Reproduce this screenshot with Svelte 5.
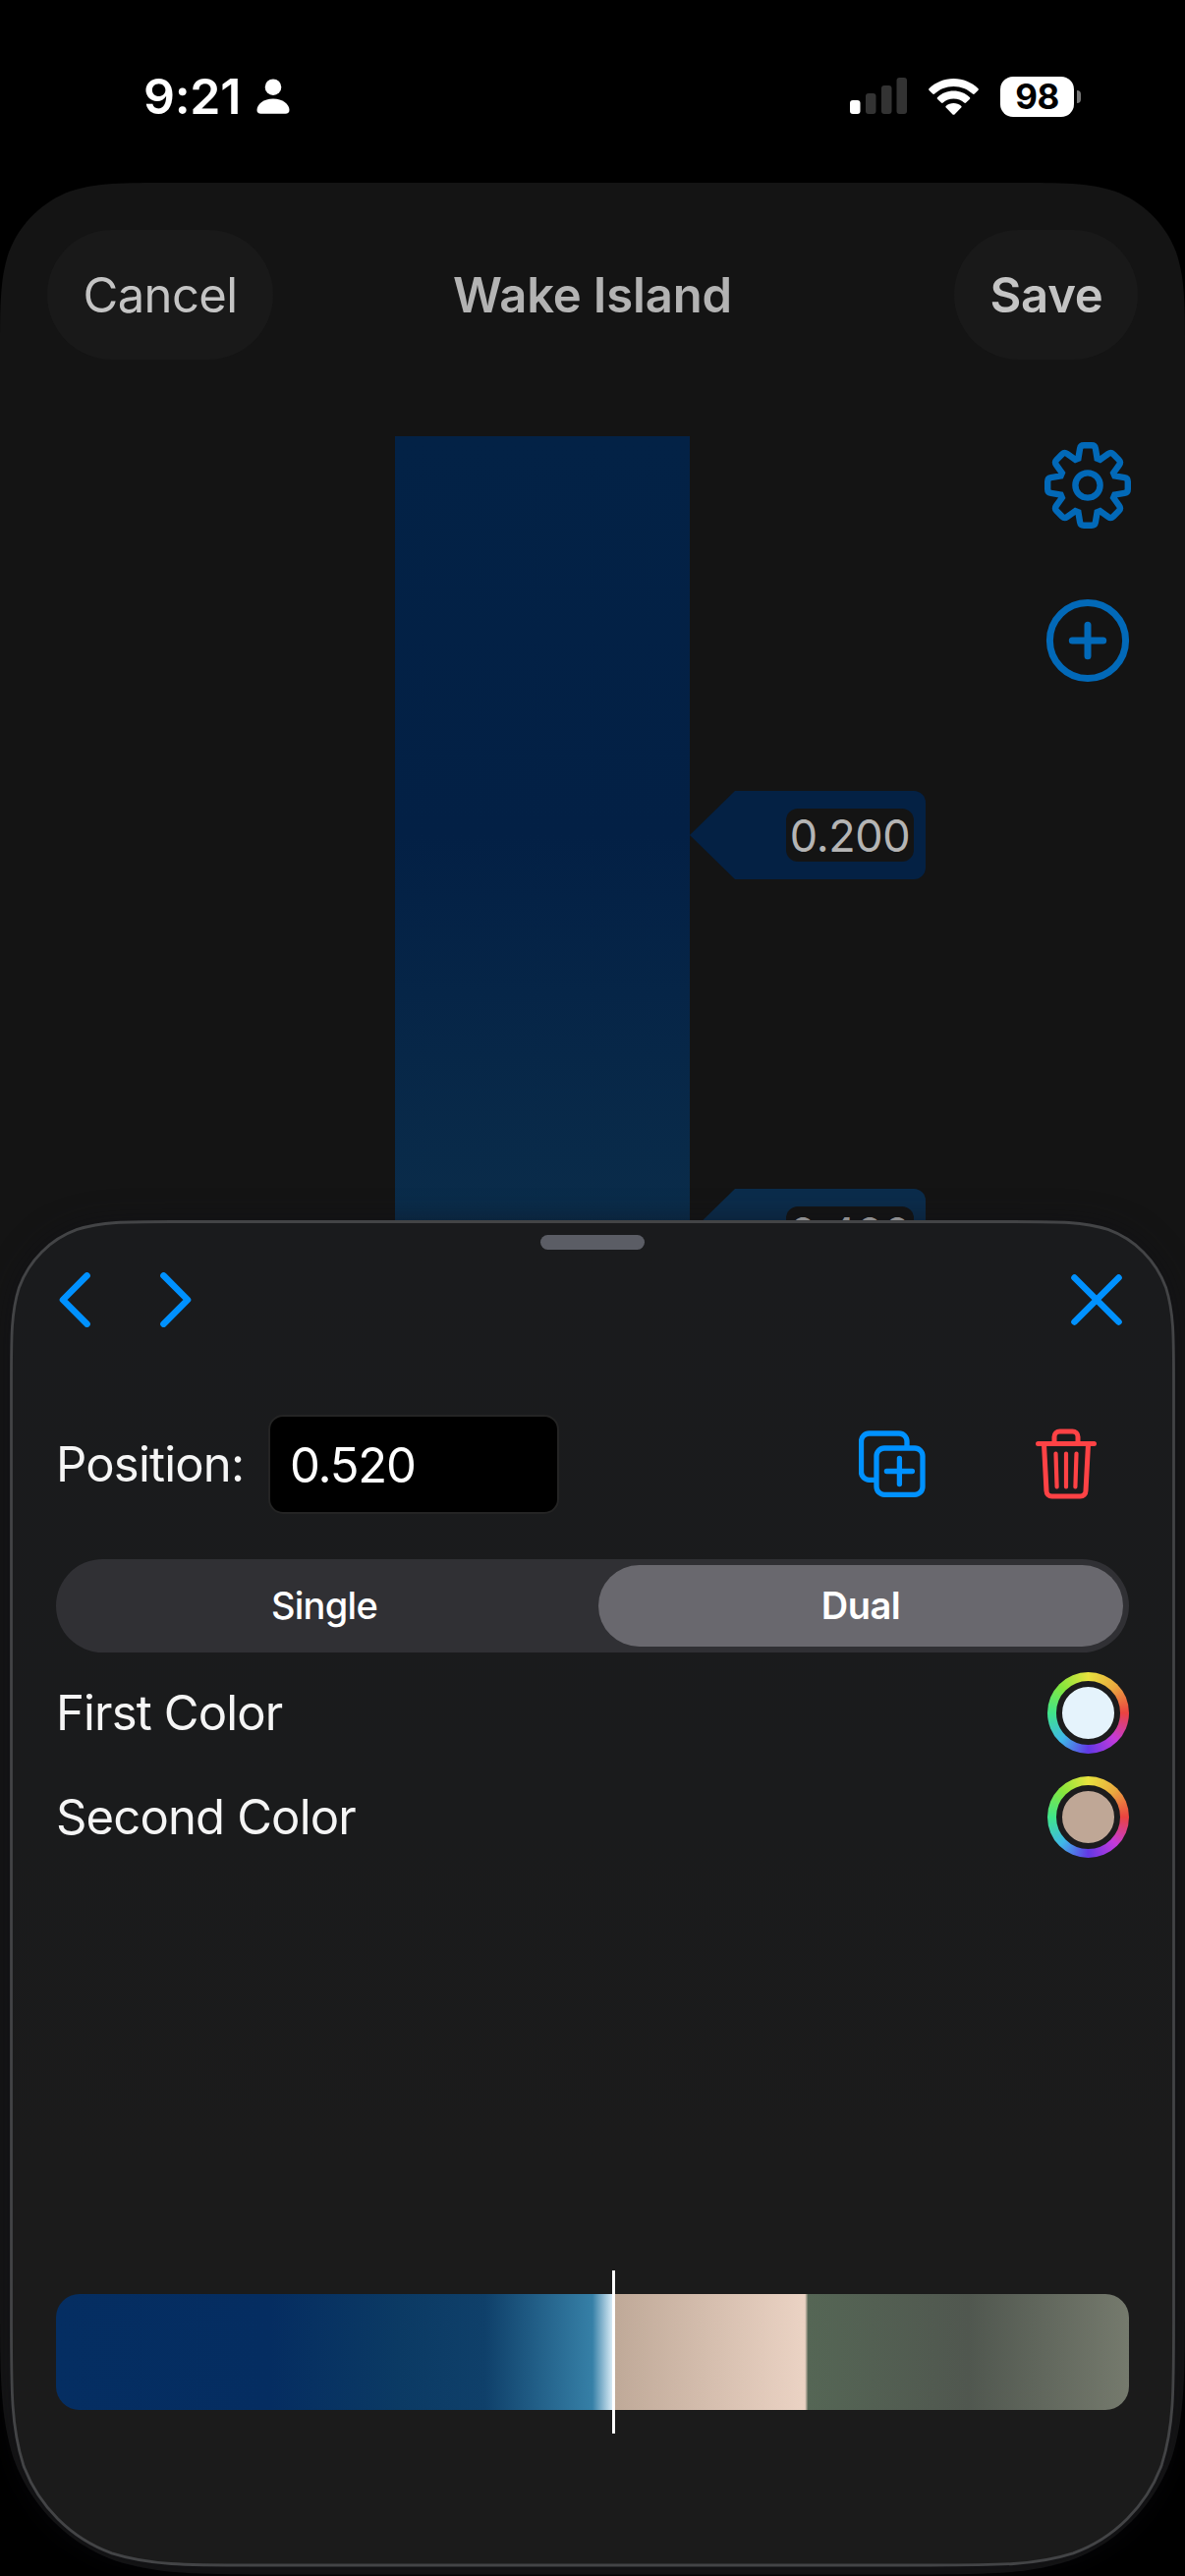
<script>
  // Smooth "continuous" corners: builds a rounded rectangle with separate top and bottom radii.
  function smoothRect(x0, y0, x1, y1, rt, rb) {
    const corner = (cx, cy, sx, sy, r, reverse) => {
      const pts = [
        [1.52866, 0], [1.08849, 0], [0.86841, 0], [0.63149, 0.07491],
        [0.37282, 0.16906], [0.16906, 0.37282], [0.07491, 0.63149],
        [0, 0.86841], [0, 1.08849], [0, 1.52866]
      ].map(([a, b]) => `${(cx + sx * a * r).toFixed(2)} ${(cy + sy * b * r).toFixed(2)}`);
      if (reverse) pts.reverse();
      return `${pts[0]} C${pts[1]} ${pts[2]} ${pts[3]} C${pts[4]} ${pts[5]} ${pts[6]} C${pts[7]} ${pts[8]} ${pts[9]}`;
    };
    return (
      'M' + corner(x1, y0, -1, 1, rt, false) +
      ' L' + corner(x1, y1, -1, -1, rb, true) +
      ' L' + corner(x0, y1, 1, -1, rb, false) +
      ' L' + corner(x0, y0, 1, 1, rt, true) + 'Z'
    );
  }

  const sheetPath = smoothRect(0, 0, 1206, 2434.5, 114, 186);
  const panelPath = smoothRect(1.5, 1.5, 1184.5, 1369, 106, 162);

  // Eight-tooth gear outline.
  function gearPath() {
    const tooth = [[-9.6, -27.4], [-7.9, -37.5], [-7.3, -40.8], [-4, -40.8], [4, -40.8], [7.3, -40.8], [7.9, -37.5], [9.6, -27.4]];
    let d = '';
    for (let i = 0; i < 8; i++) {
      const a = (i * Math.PI) / 4;
      const p = tooth.map(([x, y]) =>
        `${(x * Math.cos(a) - y * Math.sin(a)).toFixed(2)} ${(x * Math.sin(a) + y * Math.cos(a)).toFixed(2)}`);
      d += `${i ? 'L' : 'M'}${p[0]} L${p[1]} Q${p[2]} ${p[3]} L${p[4]} Q${p[5]} ${p[6]} L${p[7]} `;
    }
    return d + 'Z';
  }
  const gear = gearPath();

  const markers = [
    { label: '0.200', at: 0.2, tone: 'deep' },
    { label: '0.400', at: 0.4, tone: 'mid' }
  ];
  const colors = [
    { label: 'First Color', tone: 'ice' },
    { label: 'Second Color', tone: 'sand' }
  ];
  let position = '0.520';
</script>

<div class="screen">
  <header class="status">
    <div class="clock">
      <span class="time">9:21</span>
      <svg class="person" viewBox="0 0 34 36"><circle cx="17" cy="8.7" r="8.3" /><path d="M17 20.5c9.500 0 16.500 5.500 16.500 11.500 0 2.500-1.500 3.800-4 3.800H4.500c-2.500 0-4-1.300-4-3.800C.5 26 7.500 20.500 17 20.500Z" /></svg>
    </div>
    <div class="indicators">
      <svg class="signal" viewBox="0 0 58 38">
        <rect x="0" y="23" width="10.500" height="14" rx="3" />
        <g class="off"><rect x="16" y="16" width="10.500" height="21" rx="3" /><rect x="32" y="8" width="10.500" height="29" rx="3" /><rect x="47.500" y="0" width="10.500" height="37" rx="3" /></g>
      </svg>
      <svg class="wifi" viewBox="0 0 51 37">
        <path d="M25.500 0C35.300 0 44 3.800 50.400 10.100c.6.600.6 1.300 0 1.900l-3.600 3.600c-.6.600-1.300.6-1.900 0C39.900 10.800 33 8 25.500 8S11.100 10.800 6.100 15.600c-.6.600-1.300.6-1.900 0L.6 12c-.6-.6-.6-1.300 0-1.900C7 3.800 15.700 0 25.500 0Z" />
        <path d="M25.500 12.600c6.300 0 12 2.400 16.300 6.300.7.600.7 1.400 0 2l-3.700 3.700c-.6.600-1.200.6-1.900 0-2.800-2.500-6.500-4-10.700-4s-7.900 1.500-10.700 4c-.7.600-1.300.6-1.900 0l-3.700-3.700c-.7-.6-.7-1.400 0-2 4.300-3.900 10-6.300 16.300-6.300Z" />
        <path d="M25.500 25c2.900 0 5.500 1 7.600 2.700.7.600.7 1.300.1 1.900l-6.700 6.800c-.6.600-1.400.6-2 0l-6.700-6.800c-.6-.6-.6-1.300.1-1.900C20 26 22.600 25 25.500 25Z" />
      </svg>
      <div class="battery"><span class="level">98</span><span class="nub"></span></div>
    </div>
  </header>

  <main class="sheet">
    <svg class="sheet-bg" viewBox="0 0 1206 2436"><path d={sheetPath} /></svg>
    <nav class="bar">
      <button class="pill">Cancel</button>
      <h1>Wake Island</h1>
      <button class="pill save">Save</button>
    </nav>
    <div class="editor">
      <div class="ramp">
        {#each markers as m}
          <div class="marker {m.tone}" style="top: {m.at * 100}%">
            <svg class="tag" viewBox="0 0 240 90"><path d="M0 45 46 0H228a12 12 0 0 1 12 12V78a12 12 0 0 1-12 12H46Z" /></svg>
            <span class="value">{m.label}</span>
          </div>
        {/each}
      </div>
      <div class="tools">
        <svg viewBox="-45 -45 90 90"><path d={gear} /><circle r="12.600" /></svg>
        <svg class="add" viewBox="-45 -45 90 90"><circle r="38.600" /><path d="M-15.700 0H15.700M0-15.700V15.700" /></svg>
      </div>
    </div>
  </main>

  <section class="panel">
    <svg class="panel-bg" viewBox="0 0 1186 1371">
      <defs>
        <linearGradient id="panelFill" x1="0" y1="0" x2="0" y2="1">
          <stop offset="0" stop-color="#1a1b1d" /><stop offset=".45" stop-color="#1a1b1c" /><stop offset=".7" stop-color="#1b1b1b" />
        </linearGradient>
      </defs>
      <path d={panelPath} fill="url(#panelFill)" stroke="#434446" stroke-width="2.800" />
    </svg>
    <div class="grabber"></div>
    <div class="steps">
      <svg class="chevron" viewBox="0 0 32 56"><path d="M28.500 3.400 4 28 28.500 52.600" /></svg>
      <svg class="chevron next" viewBox="0 0 32 56"><path d="M3.500 3.400 28 28 3.500 52.600" /></svg>
      <svg class="close" viewBox="0 0 52 52"><path d="M3.500 3.500 48.500 48.500M48.500 3.500 3.500 48.500" /></svg>
    </div>

    <div class="position">
      <label for="pos">Position:</label>
      <input id="pos" bind:value={position} />
      <svg class="duplicate" viewBox="0 0 68 68">
        <path d="M16 50.300H10.500A8 8 0 0 1 2.500 42.300V11A8 8 0 0 1 10.500 3H41A8 8 0 0 1 49 11V16" />
        <rect x="18" y="18" width="47" height="47.300" rx="8" />
        <path d="M41.400 28.500V54.500M28.400 41.500H54.400" />
      </svg>
      <svg class="trash" viewBox="0 0 62 72">
        <path d="M2.500 15.500H59.500M19 15V8.500A5.500 5.500 0 0 1 24.500 3H37.500A5.500 5.500 0 0 1 43 8.500V15M8.500 16 11 63.500A5.500 5.500 0 0 0 16.500 69H45.500A5.500 5.500 0 0 0 51 63.500L53.500 16" />
        <path class="ribs" d="M20.500 25.500 21.600 59.500M31 25.500V59.500M41.500 25.500 40.400 59.500" />
      </svg>
    </div>

    <div class="segments">
      <button>Single</button>
      <button class="on">Dual</button>
    </div>

    {#each colors as c}
      <div class="color-row">
        <span>{c.label}</span>
        <span class="well"><i class={c.tone}></i></span>
      </div>
    {/each}

    <div class="preview"><div class="strip"></div><div class="cursor"></div></div>
  </section>
</div>

<style>
  :global(body) { background: #000; }
  .screen {
    position: relative; width: 1206px; height: 2622px; overflow: hidden;
    display: flex; flex-direction: column; background: #000; color: #f5f5f5;
    font: 400 49px/60px Inter, sans-serif;
  }
  svg { display: block; flex: none; }
  button { all: unset; box-sizing: border-box; text-align: center; }

  .status {
    height: 186px; flex: none; box-sizing: border-box; padding: 68px 106px 58px 146px;
    display: flex; justify-content: space-between; align-items: center; color: #fff; fill: #fff;
  }
  .clock, .indicators { display: flex; align-items: center; }
  .time { font-weight: 600; font-size: 50px; letter-spacing: -.3px; width: 115px; white-space: nowrap; }
  .person { width: 34px; height: 36px; }
  .signal { width: 58px; height: 38px; margin-right: 22px; }
  .off { fill: #333; }
  .wifi { width: 51px; height: 37px; margin-right: 22px; }
  .battery { display: flex; align-items: center; gap: 3px; }
  .level {
    width: 75px; height: 41px; border-radius: 13px; background: #fff; color: #000;
    font: 700 35px/41px Inter, sans-serif; text-align: center; letter-spacing: -.5px;
  }
  .nub { width: 4px; height: 13px; border-radius: 0 4px 4px 0; background: #777; }

  .sheet { position: relative; flex: 1; display: flex; flex-direction: column; }
  .sheet-bg { position: absolute; inset: 0; width: 1206px; height: 2436px; fill: #141414; }
  .bar {
    position: relative; display: grid; grid-template-columns: 1fr auto 1fr; align-items: center;
    padding: 48px 48px 0; color: #b3b3b3;
  }
  h1 { margin: 0; padding-top: 2px; font: 600 49px/60px Inter, sans-serif; letter-spacing: -.15px; }
  .pill {
    width: 230px; height: 132px; padding-top: 2px; border-radius: 66px; background: #191919; color: #c4c4c4;
    letter-spacing: -.6px;
  }
  .save { width: 187px; justify-self: end; font-weight: 600; letter-spacing: -.2px; padding-left: 1px; }
  .editor {
    position: relative; flex: 1; display: grid; grid-template-columns: 402px 300px 1fr;
    padding-top: 78px;
  }
  .ramp {
    grid-column: 2; position: relative; height: 2028px; margin-bottom: -100px;
    background: linear-gradient(#032246, #032045 20%, #0a2c4a 39%, #0b2d4b 40%);
  }
  .marker { position: absolute; left: 300px; width: 240px; height: 90px; margin-top: -45px; }
  .deep { fill: #042144; }
  .mid { fill: #0b2c4b; }
  .tag { width: 240px; height: 90px; }
  .value {
    position: absolute; left: 98px; top: 18px; width: 130px; height: 54px; border-radius: 12px;
    background: #141414; color: #b5b5b5; font-size: 45px; line-height: 55px; text-align: center;
    letter-spacing: -.4px;
  }
  .tools {
    grid-column: 3; justify-self: end; padding: 5px 54px 0 0;
    display: flex; flex-direction: column; gap: 68px;
  }
  .tools svg { width: 90px; height: 90px; fill: none; stroke: #0269b8; stroke-width: 6.400; }
  .tools .add { stroke-width: 7; stroke-linecap: round; }

  .panel {
    position: absolute; left: 10px; top: 1242px; width: 1186px; height: 1371px;
    box-sizing: border-box; padding: 15px 47px 0 47px; display: flex; flex-direction: column;
    filter: drop-shadow(0 0 14px rgba(14, 14, 22, .5));
  }
  .panel-bg { position: absolute; inset: 0; width: 1186px; height: 1371px; }
  .panel > :not(.panel-bg) { position: relative; }
  .grabber { align-self: center; width: 106px; height: 15px; border-radius: 8px; background: #5b5d65; }
  .steps {
    display: flex; align-items: center; height: 56px; margin-top: 23px; padding: 0 7px 0 3px;
    fill: none; stroke: #0091ff; stroke-width: 6.600; stroke-linecap: round; stroke-linejoin: round;
  }
  .chevron { width: 32px; height: 56px; }
  .next { margin-left: 71px; }
  .close { width: 52px; height: 52px; margin-left: auto; }

  .position { display: flex; align-items: center; height: 100px; margin-top: 89px; }
  label { width: 216px; white-space: nowrap; letter-spacing: -.8px; padding-top: 2px; }
  input {
    box-sizing: border-box; width: 296px; height: 101px; margin: 0; padding: 2px 20px 0; outline: 0;
    border: 2px solid #242424; border-radius: 15px; background: #000; color: #fff;
    font: 400 49px/60px Inter, sans-serif; letter-spacing: -1.2px;
  }
  .duplicate {
    width: 68px; height: 68px; margin-left: 305px;
    fill: none; stroke: #0091ff; stroke-width: 5.300; stroke-linecap: butt;
  }
  .duplicate path:last-child { stroke-linecap: round; }
  .trash {
    width: 62px; height: 72px; margin-left: 112px;
    fill: none; stroke: #ff4245; stroke-width: 5; stroke-linecap: round; stroke-linejoin: round;
  }
  .ribs { stroke-width: 4.200; }

  .segments {
    display: grid; grid-template-columns: 546px 534px; height: 95px; margin-top: 47px; padding: 6px;
    box-sizing: border-box; border-radius: 48px; background: #303034;
  }
  .segments button {
    font: 500 38px/83px Inter, sans-serif; letter-spacing: -.7px; padding-right: 12px;
    border-radius: 42px; color: #fff;
  }
  .segments .on { background: #69686e; font-weight: 600; letter-spacing: -.5px; padding: 0; }

  .color-row {
    display: flex; align-items: center; justify-content: space-between; height: 83px; margin-top: 20px;
    letter-spacing: -.85px;
  }
  .color-row + .color-row { margin-top: 23px; }
  .well {
    width: 83px; height: 83px; box-sizing: border-box; padding: 9px; border-radius: 50%; display: grid;
    background:
      conic-gradient(#e8e23e, #eaa93f 45deg, #ea4340 90deg, #c33adb 135deg, #6238e6 180deg, #3fb8e8 225deg, #40e58a 270deg, #86e63c 315deg, #e8e23e);
  }
  .well i { border-radius: 50%; border: 6px solid #1c1c1d; }
  .ice { background: #e5f3fc; }
  .sand { background: #bfa796; }

  .preview { margin-top: auto; margin-bottom: 136px; display: grid; height: 166px; align-items: center; }
  .strip, .cursor { grid-area: 1 / 1; }
  .strip {
    height: 118px; border-radius: 24px;
    background: linear-gradient(90deg, #052e62, #052d61 20%, #0b3a64 32%, #0f406a 40%, #3680a7 50%, #e5f3fc 52%,
      #bfa998 52%, #ebd3c4 69.8%, #556655 70.1%, #50574f 85%, #757a6d);
  }
  .cursor { width: 3px; height: 166px; margin-left: 566px; background: #fff; }
</style>
